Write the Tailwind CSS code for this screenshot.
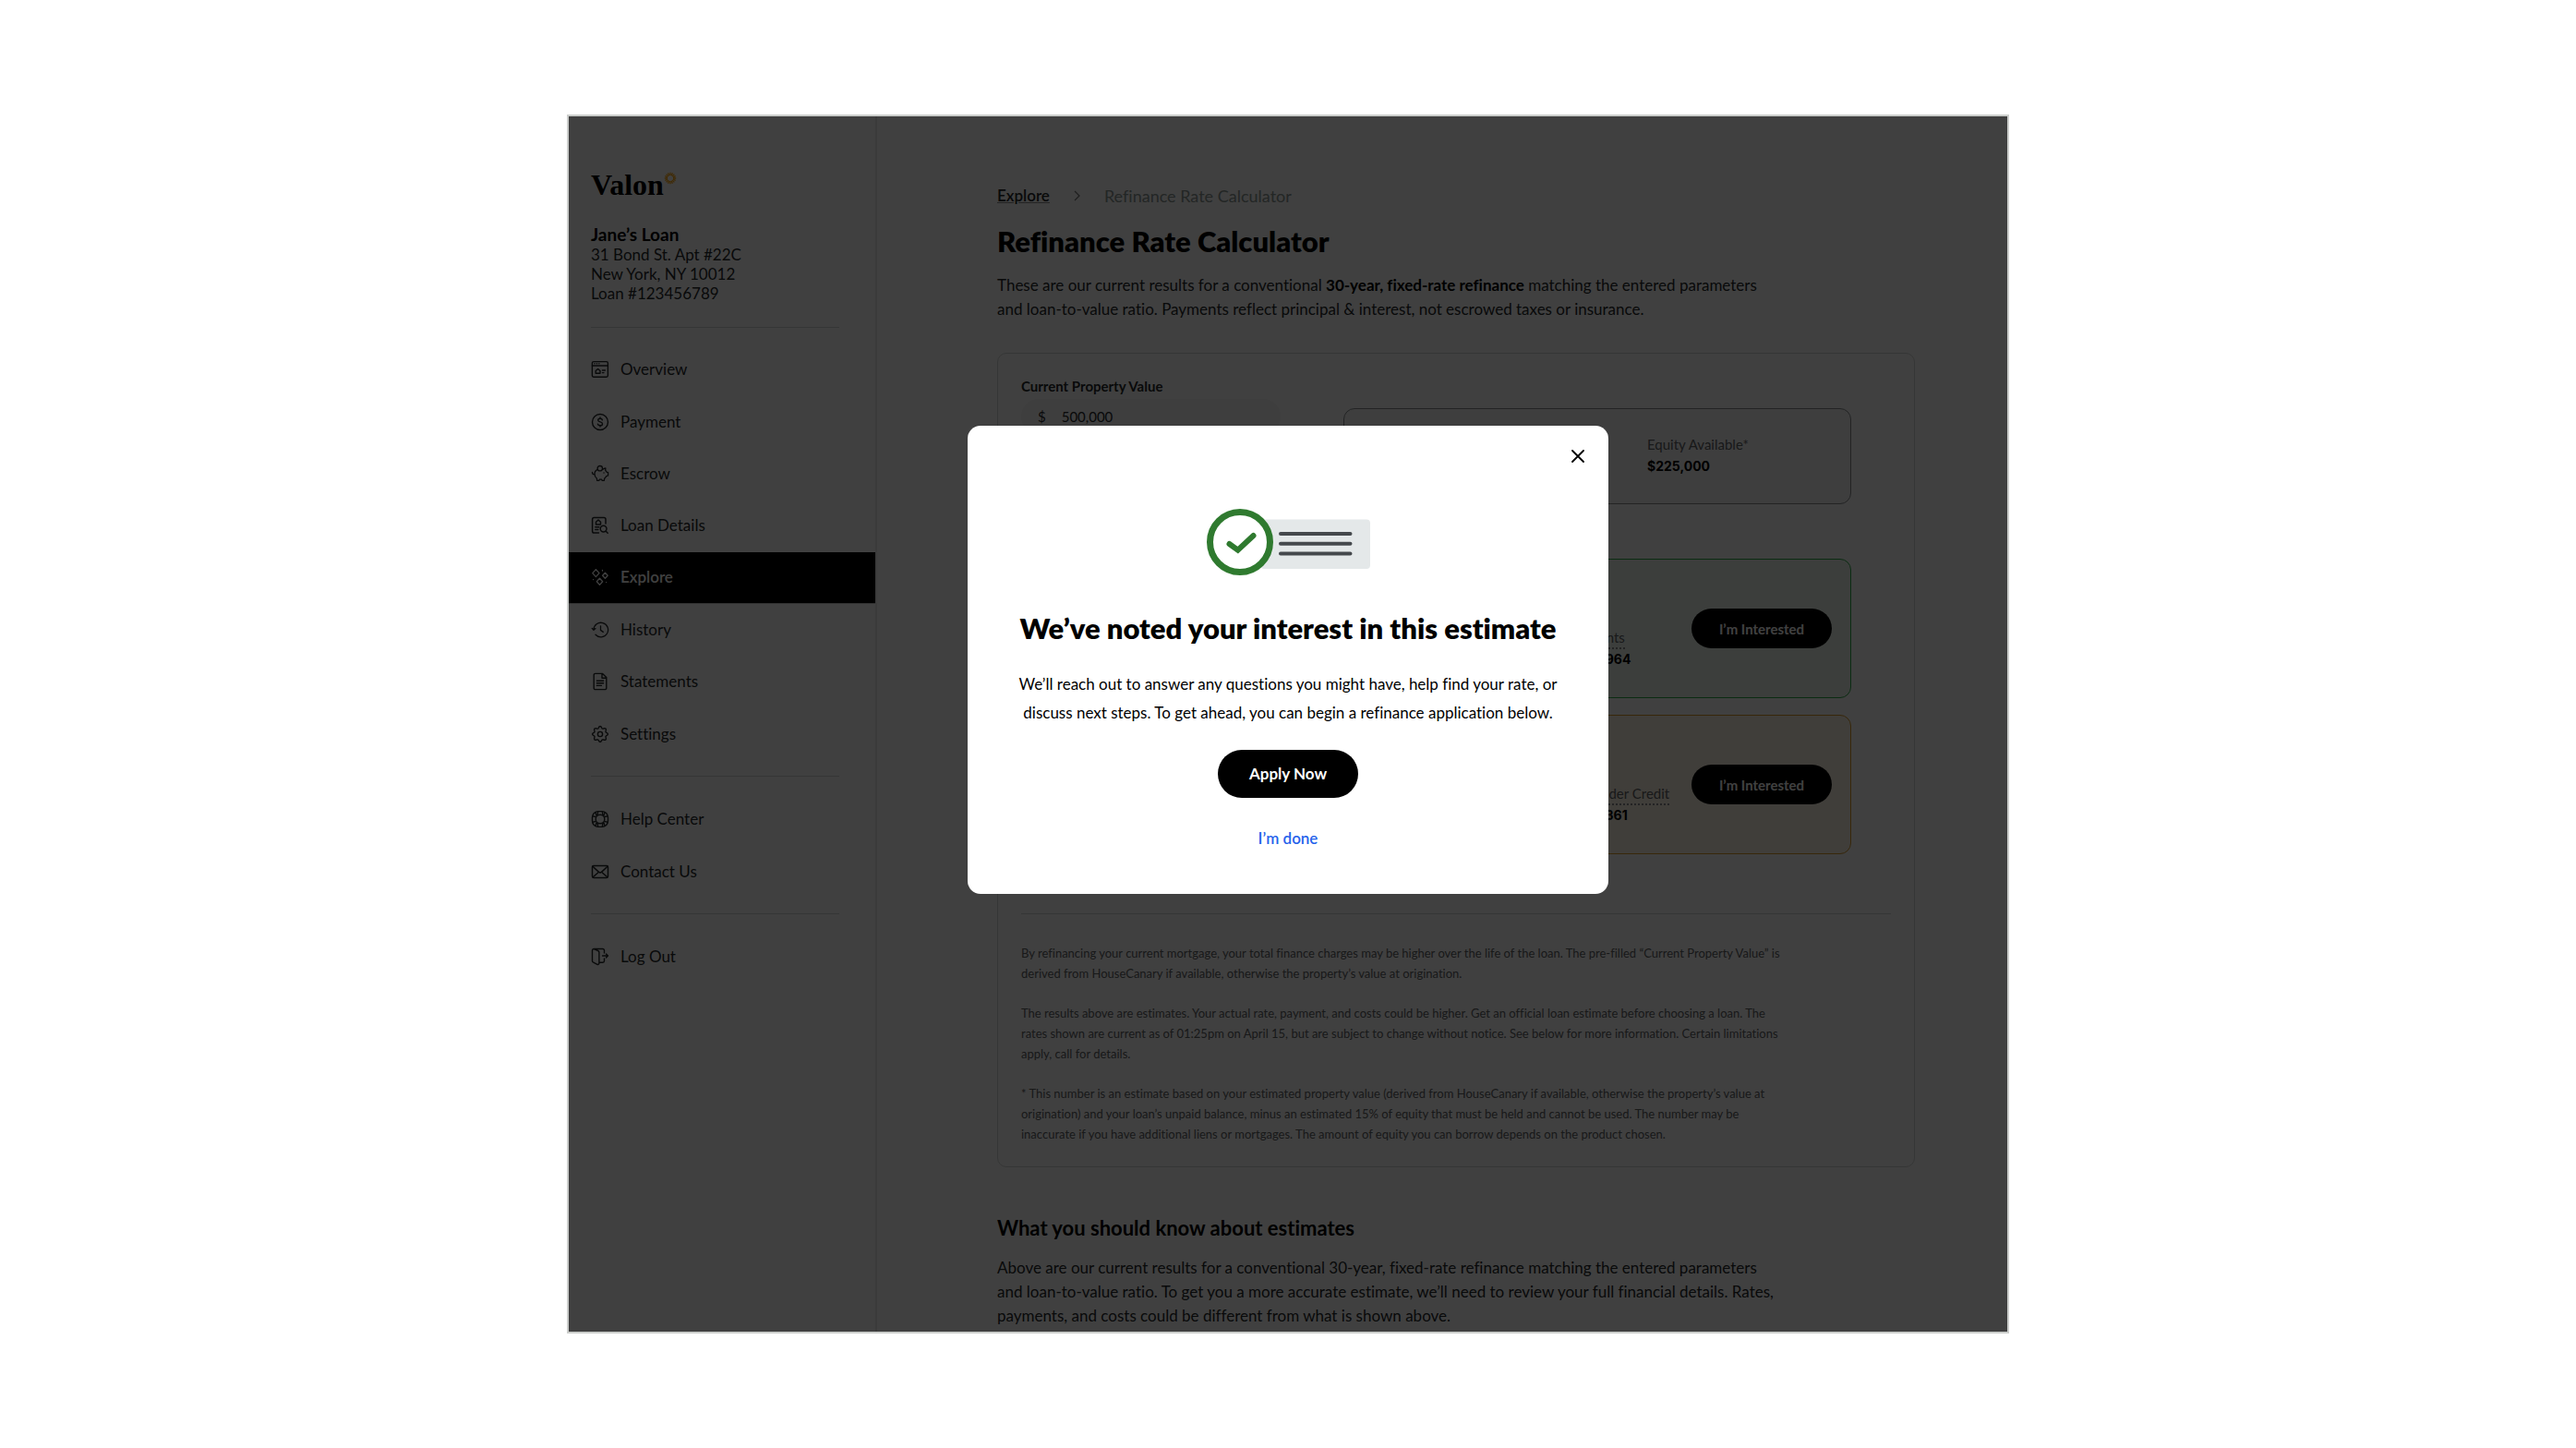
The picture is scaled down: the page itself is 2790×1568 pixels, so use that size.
<!DOCTYPE html>
<html lang="en">
<head>
  <meta charset="UTF-8" />
  <meta name="viewport" content="width=device-width, initial-scale=1.0" />
  <title>Refinance Rate Calculator</title>
  <script src="https://cdn.jsdelivr.net/npm/@tailwindcss/browser@4"></script>
</head>
<body class="bg-white font-['Lato',sans-serif] text-[17px] leading-[26px] text-[#26292b] [font-variant-ligatures:no-common-ligatures]">
  <div class="h-screen flex justify-center py-[124px]">
    <div class="relative flex w-full max-w-[1562px] overflow-hidden border-2 border-[#cbcdcb] bg-white">

      <!-- Sidebar -->
      <aside class="w-[334px] shrink-0 border-r-2 border-[#ebebeb] pt-14">
        <div class="px-6">
          <div class="flex items-start text-black">
            <span class="font-['Liberation_Serif',serif] text-[32px] leading-[36px] font-bold">Valon</span>
            <svg class="mt-1 h-[14px] w-[14px]" viewBox="0 0 14 14" fill="none" stroke="#ffa812" stroke-width="1.3">
              <path d="M7 .8V4M7 10v3.2M.8 7H4M10 7h3.2M2.6 2.6l2.3 2.3M9.1 9.1l2.3 2.3M2.6 11.4l2.3-2.3M9.1 4.9l2.3-2.3M4.6 1.3l1.2 2.9M8.2 9.8l1.2 2.9M1.3 9.4l2.9-1.2M9.8 5.8l2.9-1.2M4.6 12.7l1.2-2.9M8.2 4.2l1.2-2.9M1.3 4.6l2.9 1.2M9.8 8.2l2.9 1.2" />
            </svg>
          </div>
          <div class="mt-[25px]">
            <h2 class="text-[19px] leading-[22px] font-bold text-black">Jane’s Loan</h2>
            <address class="leading-[21px] not-italic">31 Bond St. Apt #22C<br />New York, NY 10012<br />Loan #123456789</address>
          </div>
        </div>

        <hr class="mt-[26px] mb-[17px] ml-6 mr-[39px] border-[#d4d8d7]" />

        <nav class="grid h-[451px] auto-rows-fr">
          <a href="#" class="flex items-center gap-3 px-6">
            <svg class="h-5 w-5" viewBox="0 0 20 20" fill="none" stroke="currentColor" stroke-width="1.4" stroke-linecap="round" stroke-linejoin="round"><rect x="1.4" y="1.6" width="17" height="16.6" rx="1.6" /><path d="M1.4 6h17M4 3.8h.1M6.4 3.8h.1M8.8 3.8h.1M5.2 11.6 7.6 9.4l2.4 2.2v2.6H5.2zM12.4 11h3M12.4 13.6h1.6" /></svg>
            Overview
          </a>
          <a href="#" class="flex items-center gap-3 px-6">
            <svg class="h-5 w-5" viewBox="0 0 20 20" fill="none" stroke="currentColor" stroke-width="1.4" stroke-linecap="round"><circle cx="10" cy="10" r="8.5" /><path d="M12.4 7.8c-.2-1-1.1-1.6-2.4-1.6s-2.3.7-2.3 1.8c0 2.6 4.8 1.2 4.8 3.9 0 1.2-1 1.9-2.5 1.9s-2.4-.7-2.6-1.7M10 5v1.2M10 13.8V15" /></svg>
            Payment
          </a>
          <a href="#" class="flex items-center gap-3 px-6">
            <svg class="h-5 w-5" viewBox="0 0 20 20" fill="none" stroke="currentColor" stroke-width="1.3" stroke-linecap="round" stroke-linejoin="round"><circle cx="9.8" cy="4.2" r="2.7" /><path d="M7.3 5.4C5.3 6.2 4 8 4 10.2c0 2 .9 3.6 2.3 4.8l.4 2.4h2.2l.4-1.2h2.4l.4 1.2h2.2l.5-2.4c.8-.6 1.5-1.4 1.9-2.3l1.9-.7V8.6l-1.7-.5c-.3-.7-.7-1.3-1.2-1.800l.2-2.300c-1.300 0-2.300.5-3 1.300M4 10.600c-1.600.3-2.600-.6-2.500-2.100M14 9h.1" /></svg>
            Escrow
          </a>
          <a href="#" class="flex items-center gap-3 px-6">
            <svg class="h-5 w-5" viewBox="0 0 20 20" fill="none" stroke="currentColor" stroke-width="1.5" stroke-linecap="round" stroke-linejoin="round"><path d="M8.5 18H3.4a1.8 1.8 0 0 1-1.8-1.8V3.4a1.8 1.8 0 0 1 1.8-1.8h10.8A1.8 1.8 0 0 1 16 3.4V8M5.5 6.2 8 4l2.5 2.2V9h-5zM4.8 11.8h4M4.8 14.6h3" /><circle cx="13.6" cy="13.6" r="3.4" /><path d="m16.2 16.2 2 2" /></svg>
            Loan Details
          </a>
          <a href="#" aria-current="page" class="flex items-center gap-3 border-b border-[#c8c8c8] bg-black px-6 font-semibold text-white">
            <svg class="h-5 w-5" viewBox="0 0 20 20" fill="none" stroke="currentColor" stroke-width="1.3" stroke-linejoin="round"><path d="m5.4 1.6 3.6 4-3.6 4-3.6-4zM15.4 5.2l2.8 3-2.8 3-2.8-3zM9.5 11.2l3.2 3.6-3.2 3.6-3.2-3.6z" /><path stroke-linecap="round" d="M12.5 2.4v.6M2.5 12.6h.1M16.6 15.6h.1" /></svg>
            Explore
          </a>
          <a href="#" class="flex items-center gap-3 px-6">
            <svg class="h-5 w-5" viewBox="0 0 20 20" fill="none" stroke="currentColor" stroke-width="1.3" stroke-linecap="round" stroke-linejoin="round"><path d="M3 10a7.8 7.8 0 1 1 2 5.300M1.200 8.400 3 10.300l2-1.700M10.500 5.800v4.600l2.800 2" /></svg>
            History
          </a>
          <a href="#" class="flex items-center gap-3 px-6">
            <svg class="h-5 w-5" viewBox="0 0 20 20" fill="none" stroke="currentColor" stroke-width="1.4" stroke-linecap="round" stroke-linejoin="round"><path d="M12.6 1.4H4.8a1.6 1.6 0 0 0-1.6 1.6v14a1.6 1.6 0 0 0 1.6 1.6h10.4a1.6 1.6 0 0 0 1.6-1.6V5.6zM12 1.6v4.6h4.6M6.4 9.2h7.2M6.4 11.8h7.2M6.4 14.4h5" /></svg>
            Statements
          </a>
          <a href="#" class="flex items-center gap-3 px-6">
            <svg class="h-5 w-5" viewBox="0 0 20 20" fill="none" stroke="currentColor" stroke-width="1.4" stroke-linejoin="round"><circle cx="10" cy="10" r="2.6" /><path d="M8.3 3.2c.7-2.2 2.7-2.2 3.4 0 .3.8 1 1.1 1.9.8 2.2-1 3.4.4 2.5 2.5-.4.9-.1 1.5.7 1.9 2.2.8 2.2 2.4 0 3.2-.8.4-1.1 1-.7 1.9.9 2.1-.3 3.5-2.5 2.5-.9-.3-1.6 0-1.9.8-.7 2.2-2.7 2.2-3.4 0-.3-.8-1-1.1-1.9-.8-2.2 1-3.4-.4-2.5-2.5.4-.9.1-1.5-.7-1.9-2.2-.8-2.2-2.4 0-3.2.8-.4 1.1-1 .7-1.9C3 4.4 4.2 3 6.4 4c.9.3 1.6 0 1.9-.8z" /></svg>
            Settings
          </a>
        </nav>

        <hr class="mt-[17px] mb-[18px] ml-6 mr-[39px] border-[#d4d8d7]" />

        <nav class="grid h-[113px] auto-rows-fr">
          <a href="#" class="flex items-center gap-3 px-6">
            <svg class="h-5 w-5" viewBox="0 0 20 20" fill="none" stroke="currentColor" stroke-width="1.4" stroke-linejoin="round"><rect x="1.5" y="1.6" width="17" height="16.8" rx="6.5" /><circle cx="10" cy="10" r="4.8" /><path d="m7.6 1.7-.4 4M4.8 2.6l1.5 4M1.8 6.8l4 .8M12.4 1.7l.4 4M15.2 2.6l-1.5 4M18.2 6.8l-4 .8M7.6 18.3l-.4-4M4.8 17.4l1.5-4M1.8 13.2l4-.8M12.4 18.3l.4-4M15.2 17.4l-1.5-4M18.2 13.2l-4-.8" /></svg>
            Help Center
          </a>
          <a href="#" class="flex items-center gap-3 px-6">
            <svg class="h-5 w-5" viewBox="0 0 20 20" fill="none" stroke="currentColor" stroke-width="1.5" stroke-linecap="round" stroke-linejoin="round"><rect x="1.5" y="3.4" width="17" height="13" rx="1.4" /><path d="m2 4.2 6.3 5.9c1 .9 2.4.9 3.4 0L18 4.2M2.2 15.8l5.2-4.6M17.8 15.8l-5.2-4.6" /></svg>
            Contact Us
          </a>
        </nav>

        <hr class="mt-[17px] mb-[18px] ml-6 mr-[39px] border-[#d4d8d7]" />

        <a href="#" class="flex h-14 items-center gap-3 px-6">
          <svg class="h-5 w-5" viewBox="0 0 20 20" fill="none" stroke="currentColor" stroke-width="1.4" stroke-linecap="round" stroke-linejoin="round"><path d="M14.5 6V3.2a1.7 1.7 0 0 0-1.7-1.7H3.2a1.7 1.7 0 0 0-1.7 1.7v11.2c0 .8.5 1.5 1.2 1.8l4.2 2.1c1 .4 2-.2 2-1.3V5.3c0-.8-.5-1.5-1.2-1.8L3.2 1.7M9 16.2h3.8a1.7 1.7 0 0 0 1.7-1.7V12M12.5 9h6M16.5 7l2 2-2 2" /></svg>
          Log Out
        </a>
      </aside>

      <!-- Content -->
      <main class="flex-1 pt-[73px] pr-[100px] pl-[130px]">
        <nav class="flex items-center gap-[26px]">
          <a href="#" class="font-semibold underline decoration-[#8c8c8c]">Explore</a>
          <svg class="h-3 w-[7px]" viewBox="0 0 7 12" fill="none" stroke="#777" stroke-width="1.2"><path d="m1 1 5 5-5 5" /></svg>
          <span class="text-[18px] text-[#8b9693]">Refinance Rate Calculator</span>
        </nav>

        <h1 class="mt-4 text-[31px] leading-[40px] font-extrabold text-black">Refinance Rate Calculator</h1>
        <p class="mt-[15px]">These are our current results for a conventional <b class="text-black">30-year, fixed-rate refinance</b> matching the entered parameters<br />and loan-to-value ratio. Payments reflect principal &amp; interest, not escrowed taxes or insurance.</p>

        <section class="mt-[34px] rounded-[10px] border border-[#d4d8d7] px-[25px] pt-6 pb-6">
          <div class="grid grid-cols-[281px_1fr] gap-[68px] pr-[43px] text-[15px]">
            <form>
              <label for="value" class="block leading-[22px] font-bold">Current Property Value</label>
              <div class="mt-[3px] flex h-[38px] items-center gap-[17px] rounded-full bg-[#f5f5f5] px-[18px]">
                <span>$</span>
                <input id="value" type="text" value="500,000" class="w-full bg-transparent outline-none" />
              </div>
            </form>

            <div class="pt-[35px]">
              <div class="grid h-[104px] grid-cols-[1fr_220px] items-center rounded-[12px] border border-[#8a8d8f] bg-[#f7f7f7]">
                <div class="col-start-2 pb-[2px] leading-[23px]">
                  <div class="text-[#5f6366]">Equity Available*</div>
                  <div class="font-['Inter',sans-serif] text-[14px] font-bold text-black">$225,000</div>
                </div>
              </div>

              <div class="mt-[59px] grid h-[151px] grid-cols-[1fr_113px_152px] rounded-[12px] border border-[#2fae4a] bg-[#f0f8f0] pr-5">
                <div class="col-start-2 self-end pb-[30px]">
                  <div class="inline-block border-b-2 border-dotted border-[#8a8d8f] leading-[22px] text-[#5f6366]">Points</div>
                  <div class="font-['Inter',sans-serif] text-[14px] leading-[22px] font-bold text-black">$1,964</div>
                </div>
                <button type="button" class="h-[43px] self-center rounded-full bg-black font-bold text-white">I’m Interested</button>
              </div>

              <div class="mt-[18px] grid h-[151px] grid-cols-[1fr_113px_152px] rounded-[12px] border border-[#d99a2b] bg-[#fff6e6] pr-5">
                <div class="col-start-2 self-end pb-[30px]">
                  <div class="inline-block border-b-2 border-dotted border-[#8a8d8f] leading-[22px] text-[#5f6366]">Lender Credit</div>
                  <div class="font-['Inter',sans-serif] text-[14px] leading-[22px] font-bold text-black">$1,361</div>
                </div>
                <button type="button" class="h-[43px] self-center rounded-full bg-black font-bold text-white">I’m Interested</button>
              </div>
            </div>
          </div>

          <hr class="mt-16 mb-[31px] border-[#d4d8d7]" />

          <div class="space-y-[21px] text-[13px] leading-[22px] text-[#5f6366]">
            <p>By refinancing your current mortgage, your total finance charges may be higher over the life of the loan. The pre-filled “Current Property Value” is<br />derived from HouseCanary if available, otherwise the property’s value at origination.</p>
            <p>The results above are estimates. Your actual rate, payment, and costs could be higher. Get an official loan estimate before choosing a loan. The<br />rates shown are current as of 01:25pm on April 15, but are subject to change without notice. See below for more information. Certain limitations<br />apply, call for details.</p>
            <p>* This number is an estimate based on your estimated property value (derived from HouseCanary if available, otherwise the property’s value at<br />origination) and your loan’s unpaid balance, minus an estimated 15% of equity that must be held and cannot be used. The number may be<br />inaccurate if you have additional liens or mortgages. The amount of equity you can borrow depends on the product chosen.</p>
          </div>
        </section>

        <h2 class="mt-[53px] text-[22px] leading-[26px] font-bold text-black">What you should know about estimates</h2>
        <p class="mt-[17px]">Above are our current results for a conventional 30-year, fixed-rate refinance matching the entered parameters<br />and loan-to-value ratio. To get you a more accurate estimate, we’ll need to review your full financial details. Rates,<br />payments, and costs could be different from what is shown above.</p>
      </main>

      <!-- Modal -->
      <div class="absolute inset-0 flex items-start justify-center bg-black/75 pt-[335px]">
        <div role="dialog" aria-modal="true" aria-labelledby="modal-title" class="relative flex w-[694px] flex-col items-center rounded-[14px] bg-white pt-[89px] pb-[47px] text-center text-black">
          <button type="button" aria-label="Close" class="absolute top-6 right-6 p-[2px]">
            <svg class="h-[14px] w-[14px]" viewBox="0 0 14 14" fill="none" stroke="currentColor" stroke-width="1.8" stroke-linecap="round"><path d="m1 1 12 12M13 1 1 13" /></svg>
          </button>
          <svg class="h-[74px] w-[180px]" viewBox="0 0 180 74" fill="none">
            <rect x="60" y="12.5" width="119" height="53.5" rx="4" fill="#e4e8e9" />
            <path d="M82 28h75.5M82 38.7h75.5M82 49.5h75.5" stroke="#45494d" stroke-width="4" stroke-linecap="round" />
            <circle cx="38" cy="37" r="32.5" fill="#fff" stroke="#2f7a2f" stroke-width="7" />
            <path d="m26.5 39 9.2 6.6L52.5 30" stroke="#2f7a2f" stroke-width="6" stroke-linecap="round" />
          </svg>
          <h2 id="modal-title" class="mt-9 text-[31px] leading-[40px] font-extrabold">We’ve noted your interest in this estimate</h2>
          <p class="mt-[25px] leading-[31px]">We’ll reach out to answer any questions you might have, help find your rate, or<br />discuss next steps. To get ahead, you can begin a refinance application below.</p>
          <button type="button" class="mt-[25px] h-[52px] w-[152px] rounded-full bg-black font-bold text-white">Apply Now</button>
          <button type="button" class="mt-[31px] font-semibold text-[#2563eb]">I’m done</button>
        </div>
      </div>

    </div>
  </div>
</body>
</html>
